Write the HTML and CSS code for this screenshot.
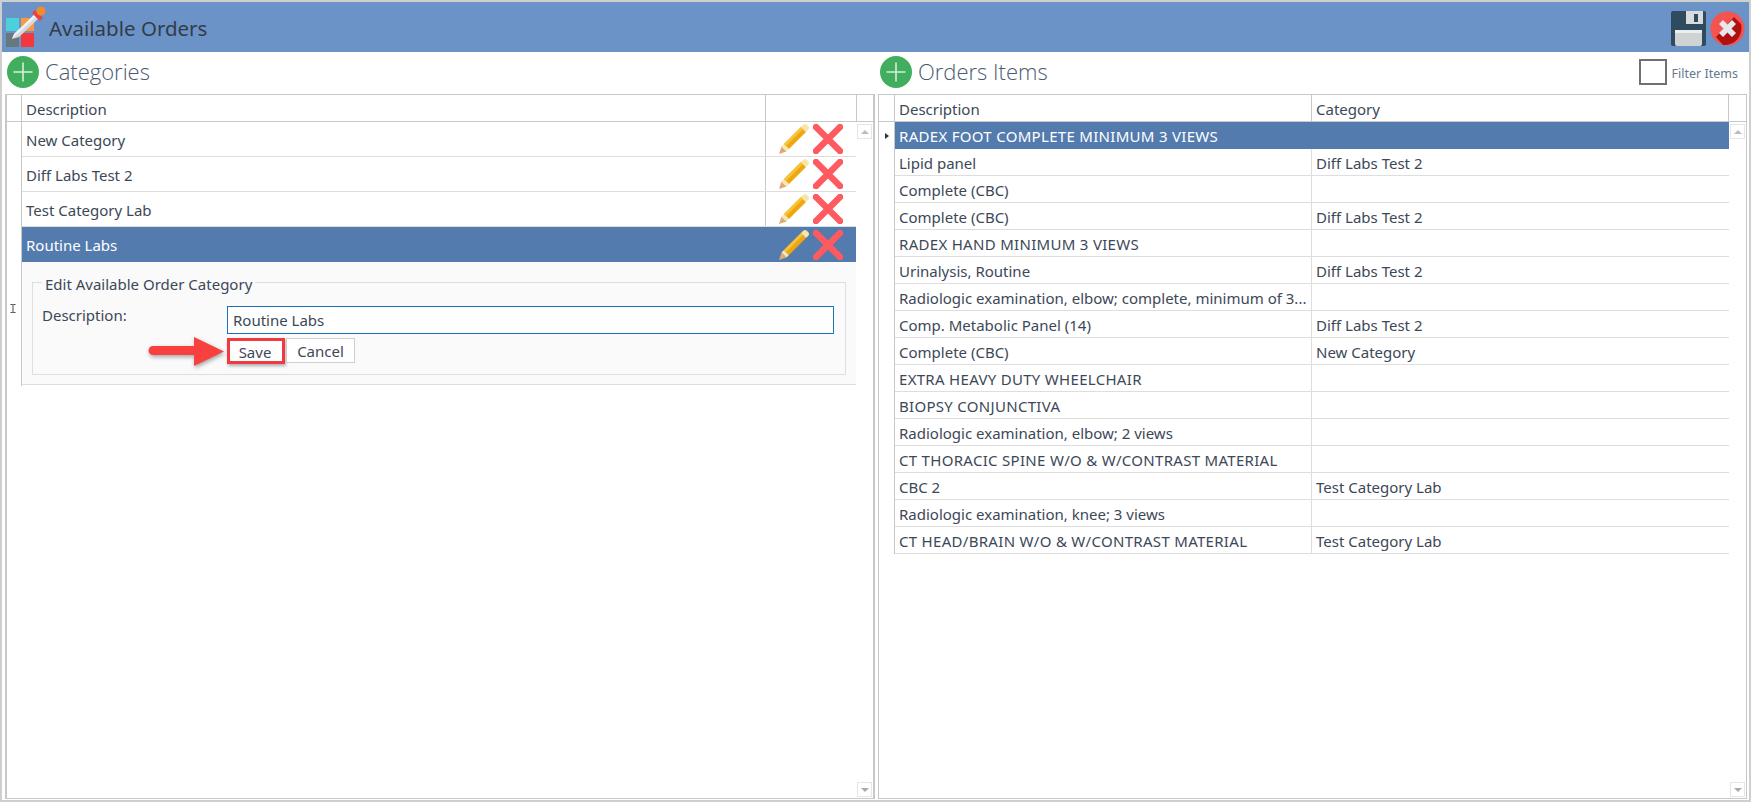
FILE: index.html
```html
<!DOCTYPE html>
<html lang="en">
<head>
<meta charset="utf-8">
<title>Available Orders</title>
<link rel="stylesheet" href="styles.css">
</head>
<body>
<div class="window">
  <header class="titlebar">
    <svg class="logo" viewBox="0 0 40 44" aria-hidden="true">
      <rect x="0" y="12" width="13" height="13" fill="#4cd0dc"/>
      <rect x="15" y="12" width="13" height="13" fill="#fb9a3c"/>
      <rect x="0" y="27" width="13" height="14" fill="#66797f"/>
      <rect x="15" y="27" width="13" height="14" fill="#f4363f"/>
      <path d="M6 33 L8 28 L28 9 L32 13 L13 31 Z" fill="#d5d9dc"/>
      <path d="M6 33 L8 28 L28 9 L30 11 Z" fill="#eef0f1"/>
      <path d="M26 7 L29 4 L37 12 L34 15 Z" fill="#ee4040"/>
      <circle cx="35" cy="5" r="4.5" fill="#f58a2c"/>
    </svg>
    <h1 class="app-title">Available Orders</h1>
    <svg class="save-icon" viewBox="0 0 35 35" aria-hidden="true">
      <path d="M2 0 H33 a2 2 0 0 1 2 2 V33 a2 2 0 0 1 -2 2 H2 a2 2 0 0 1 -2 -2 V2 a2 2 0 0 1 2 -2 Z" fill="#2f4b5f"/>
      <rect x="15" y="0" width="17" height="13" fill="#d9dcdd"/>
      <rect x="23" y="3" width="4" height="8" fill="#2f4b5f"/>
      <rect x="4" y="19" width="27" height="16" rx="2" fill="#cfd3d4"/>
      <rect x="4" y="19" width="27" height="3" fill="#eceeee"/>
    </svg>
    <svg class="close-icon" viewBox="0 0 35 35" aria-hidden="true">
      <circle cx="17.5" cy="17.5" r="17" fill="#f4544f"/>
      <path d="M24 6 L31 13 A17 17 0 0 1 13 34 L6 26 Z" fill="#b21010"/>
      <path d="M9 13 L13 9 L17.5 13.5 L22 9 L26 13 L21.5 17.5 L26 22 L22 26 L17.5 21.5 L13 26 L9 22 L13.5 17.5 Z" fill="#e6e8ec"/>
    </svg>
  </header>

  <main class="panes">
    <section class="pane">
      <div class="pane-head">
        <svg class="add-icon" viewBox="0 0 32 32" aria-hidden="true">
          <circle cx="16" cy="16" r="16" fill="#40ae5c"/>
          <path d="M16 6.5 V25.5 M6.5 16 H25.5" stroke="#d5efdc" stroke-width="1.6"/>
        </svg>
        <h2 class="pane-title">Categories</h2>
      </div>
      <div class="grid grid-left">
        <div class="grid-header">
          <div class="cell-ind"></div>
          <div class="hcell cat-desc">Description</div>
          <div class="hcell cat-act"></div>
          <div class="hcell-end"></div>
        </div>
        <div class="grid-body">
          <div class="indicator-col indicator-left">
            <svg class="ibeam" viewBox="0 0 6 9" aria-hidden="true"><path d="M.5 .5 H2.5 L3 1 L3.5 .5 H5.5 M3 1 V8 M.5 8.5 H2.5 L3 8 L3.5 8.5 H5.5" fill="none" stroke="#333" stroke-width=".9"/></svg>
          </div>
          <div class="rows">
            <div class="cat-row"><div class="cat-text">New Category</div><div class="cat-actions">
              <svg class="pencil" viewBox="0 0 30 30"><use href="#pencil"/></svg><svg class="cross" viewBox="0 0 30 30"><use href="#cross"/></svg></div></div>
            <div class="cat-row"><div class="cat-text">Diff Labs Test 2</div><div class="cat-actions">
              <svg class="pencil" viewBox="0 0 30 30"><use href="#pencil"/></svg><svg class="cross" viewBox="0 0 30 30"><use href="#cross"/></svg></div></div>
            <div class="cat-row"><div class="cat-text">Test Category Lab</div><div class="cat-actions">
              <svg class="pencil" viewBox="0 0 30 30"><use href="#pencil"/></svg><svg class="cross" viewBox="0 0 30 30"><use href="#cross"/></svg></div></div>
            <div class="cat-row selected"><div class="cat-text">Routine Labs</div><div class="cat-actions">
              <svg class="pencil" viewBox="0 0 30 30"><use href="#pencil"/></svg><svg class="cross" viewBox="0 0 30 30"><use href="#cross"/></svg></div></div>
            <div class="detail">
              <fieldset class="edit-box">
                <legend>Edit Available Order Category</legend>
                <div class="form-grid">
                  <label class="form-label" for="desc">Description:</label>
                  <input class="form-input" id="desc" type="text" value="Routine Labs">
                  <div class="form-buttons">
                    <button class="btn btn-save" type="button">Save</button>
                    <button class="btn" type="button">Cancel</button>
                    <svg class="arrow" viewBox="0 0 84 38" aria-hidden="true">
                      <path d="M4 10 H45 V1 L75 15.5 L45 30 V19 H4 a4.5 4.5 0 0 1 0 -9 Z" fill="#f8403f"/>
                    </svg>
                  </div>
                </div>
              </fieldset>
            </div>
          </div>
          <div class="scroll"><span class="sbtn"><i class="tri-up"></i></span><span class="sbtn"><i class="tri-down"></i></span></div>
        </div>
      </div>
    </section>

    <section class="pane">
      <div class="pane-head">
        <svg class="add-icon" viewBox="0 0 32 32" aria-hidden="true">
          <circle cx="16" cy="16" r="16" fill="#40ae5c"/>
          <path d="M16 6.5 V25.5 M6.5 16 H25.5" stroke="#d5efdc" stroke-width="1.6"/>
        </svg>
        <h2 class="pane-title">Orders Items</h2>
        <label class="filter"><span class="checkbox"></span><span class="filter-text">Filter Items</span></label>
      </div>
      <div class="grid grid-right">
        <div class="grid-header">
          <div class="cell-ind cell-ind-right"></div>
          <div class="hcell ord-desc">Description</div>
          <div class="hcell ord-cat">Category</div>
          <div class="hcell-end"></div>
        </div>
        <div class="grid-body">
          <div class="indicator-col indicator-right"><i class="tri-right"></i></div>
          <div class="rows">
            <div class="ord-row selected"><div class="ord-desc-c wide caps">RADEX FOOT COMPLETE MINIMUM 3 VIEWS</div></div>
            <div class="ord-row"><div class="ord-desc-c">Lipid panel</div><div class="ord-cat-c">Diff Labs Test 2</div></div>
            <div class="ord-row"><div class="ord-desc-c">Complete (CBC)</div><div class="ord-cat-c"></div></div>
            <div class="ord-row"><div class="ord-desc-c">Complete (CBC)</div><div class="ord-cat-c">Diff Labs Test 2</div></div>
            <div class="ord-row"><div class="ord-desc-c caps">RADEX HAND MINIMUM 3 VIEWS</div><div class="ord-cat-c"></div></div>
            <div class="ord-row"><div class="ord-desc-c">Urinalysis, Routine</div><div class="ord-cat-c">Diff Labs Test 2</div></div>
            <div class="ord-row"><div class="ord-desc-c">Radiologic examination, elbow; complete, minimum of 3...</div><div class="ord-cat-c"></div></div>
            <div class="ord-row"><div class="ord-desc-c">Comp. Metabolic Panel (14)</div><div class="ord-cat-c">Diff Labs Test 2</div></div>
            <div class="ord-row"><div class="ord-desc-c">Complete (CBC)</div><div class="ord-cat-c">New Category</div></div>
            <div class="ord-row"><div class="ord-desc-c caps">EXTRA HEAVY DUTY WHEELCHAIR</div><div class="ord-cat-c"></div></div>
            <div class="ord-row"><div class="ord-desc-c caps">BIOPSY CONJUNCTIVA</div><div class="ord-cat-c"></div></div>
            <div class="ord-row"><div class="ord-desc-c">Radiologic examination, elbow; 2 views</div><div class="ord-cat-c"></div></div>
            <div class="ord-row"><div class="ord-desc-c caps">CT THORACIC SPINE W/O &amp; W/CONTRAST MATERIAL</div><div class="ord-cat-c"></div></div>
            <div class="ord-row"><div class="ord-desc-c">CBC 2</div><div class="ord-cat-c">Test Category Lab</div></div>
            <div class="ord-row"><div class="ord-desc-c">Radiologic examination, knee; 3 views</div><div class="ord-cat-c"></div></div>
            <div class="ord-row"><div class="ord-desc-c caps">CT HEAD/BRAIN W/O &amp; W/CONTRAST MATERIAL</div><div class="ord-cat-c">Test Category Lab</div></div>
          </div>
          <div class="scroll"><span class="sbtn"><i class="tri-up"></i></span><span class="sbtn"><i class="tri-down"></i></span></div>
        </div>
      </div>
    </section>
  </main>
</div>

<svg class="defs" aria-hidden="true">
  <symbol id="pencil" viewBox="0 0 30 30">
    <path d="M0 30 L2.5 22.5 L7.5 27.5 Z" fill="#dfa878"/>
    <path d="M2.5 22.5 L5 20 L10 25 L7.5 27.5 Z" fill="#f6e7b0"/>
    <path d="M5 20 L22 3 L27 8 L10 25 Z" fill="#eda711"/>
    <path d="M5 20 L22 3 L24 5 L7 22 Z" fill="#f8c33a"/>
    <path d="M22 3 L24.5 0.5 Q26 -0.5 27.5 .5 L29.5 2.5 Q30.5 4 29.5 5.5 L27 8 Z" fill="#f7e6a8"/>
  </symbol>
  <symbol id="cross" viewBox="0 0 30 30">
    <path d="M3 3 L27 27 M27 3 L3 27" stroke="#ff5a60" stroke-width="6.5" stroke-linecap="round"/>
  </symbol>
</svg>
</body>
</html>
```

FILE: styles.css
```css
* { box-sizing: border-box; }
html, body { margin: 0; padding: 0; background: #fff; }
body {
  width: 1751px;
  height: 802px;
  overflow: hidden;
  font-family: "Noto Sans", "Open Sans", sans-serif;
  font-size: 15px;
  color: #3c4858;
}
.defs { width: 0; height: 0; position: absolute; }

.window {
  width: 1751px;
  height: 802px;
  border: 2px solid #cfcfcf;
  display: flex;
  flex-direction: column;
}

.titlebar {
  height: 50px;
  flex: none;
  background: #6b93c7;
  display: flex;
  align-items: center;
  padding-left: 4px;
  padding-right: 4px;
}
.logo { width: 40px; height: 44px; margin-top: 2px; flex: none; }
.app-title {
  margin: 2px 0 0 3px;
  font-size: 20.5px;
  font-weight: 400;
  color: #333c48;
}
.save-icon { width: 35px; height: 35px; margin-left: auto; margin-top: 2px; }
.close-icon { width: 35px; height: 35px; margin-left: 4px; margin-top: 2px; }

.panes {
  flex: 1;
  min-height: 0;
  display: grid;
  grid-template-columns: 870px 869px;
  column-gap: 3px;
  padding: 0 0 1px 3px;
}
.pane { display: flex; flex-direction: column; min-height: 0; }
.pane-head {
  height: 42px;
  flex: none;
  display: flex;
  align-items: center;
  padding: 0 0 2px 2px;
}
.add-icon { width: 32px; height: 32px; flex: none; }
.pane-title {
  margin: -2px 0 0 6px;
  font-family: "Open Sans", "Noto Sans", sans-serif;
  font-size: 22px;
  font-weight: 300;
  color: #4a5a70;
}
.filter {
  margin-left: auto;
  margin-right: 9px;
  display: flex;
  align-items: center;
  font-size: 12.5px;
  color: #66788e;
}
.filter-text { margin-top: 3px; }
.checkbox {
  width: 28px;
  height: 26px;
  border: 2px solid #707070;
  margin-right: 5px;
}

.grid {
  flex: 1;
  min-height: 0;
  display: flex;
  flex-direction: column;
  border: 1px solid #c8c8c8;
}
.grid-left { border-left-width: 2px; border-right-width: 2px; }

.grid-header {
  height: 27px;
  flex: none;
  display: flex;
  border-bottom: 1px solid #c8c8c8;
}
.cell-ind { width: 15px; flex: none; border-right: 1px solid #c8c8c8; }
.cell-ind-right { width: 16px; }
.hcell {
  flex: none;
  border-right: 1px solid #c8c8c8;
  padding-left: 4px;
  line-height: 28px;
}
.hcell-end { flex: 1; }
.cat-desc { width: 744px; }
.cat-act { width: 91px; }
.ord-desc { width: 417px; }
.ord-cat { width: 417px; }

.grid-body { flex: 1; min-height: 0; display: flex; }
.indicator-col { flex: none; position: relative; }
.indicator-left { width: 15px; height: 264px; border-right: 1px solid #c8c8c8; }
.indicator-right { width: 16px; height: 432px; border-right: 1px solid #c8c8c8; }
.ibeam {
  position: absolute;
  left: 3px;
  top: 182px;
  width: 6px;
  height: 9px;
}
.tri-right {
  position: absolute;
  left: 6px;
  top: 11px;
  border-left: 4px solid #333;
  border-top: 3.5px solid transparent;
  border-bottom: 3.5px solid transparent;
}

.rows { width: 834px; flex: none; }

.cat-row {
  height: 35px;
  display: flex;
  border-bottom: 1px solid #dedede;
}
.cat-text {
  width: 744px;
  flex: none;
  border-right: 1px solid #c8c8c8;
  padding-left: 4px;
  line-height: 36px;
}
.cat-actions {
  flex: 1;
  display: flex;
  align-items: center;
  padding-left: 13px;
  gap: 4px;
}
.pencil, .cross { width: 30px; height: 30px; flex: none; }
.cat-row.selected { background: #537bae; color: #fff; border-bottom: 0; }
.cat-row.selected .cat-text { border-right: 0; }

.detail {
  height: 123px;
  background: #fafafa;
  border-bottom: 1px solid #dedede;
  padding: 10px 10px 0 10px;
}
.edit-box {
  margin: 0;
  height: 103px;
  padding: 14px 11px 0 9px;
  border: 1px solid #dedede;
  min-width: 0;
}
.edit-box legend {
  padding: 0 3px;
  margin: 0;
  line-height: 20px;
  position: relative;
  top: 2px;
}
.form-grid {
  display: grid;
  grid-template-columns: 185px 607px;
  row-gap: 4px;
}
.form-label { line-height: 18px; }
.form-input {
  height: 28px;
  width: 607px;
  border: 1px solid #1c74b8;
  background: #fff;
  font: inherit;
  color: inherit;
  padding: 0 5px;
  outline: 0;
}
.form-buttons {
  grid-column: 2;
  display: flex;
  gap: 1px;
  position: relative;
}
.btn {
  height: 25px;
  width: 69px;
  padding: 0;
  border: 1px solid #cfcfcf;
  background: #fff;
  font: inherit;
  color: inherit;
  line-height: 22px;
}
.btn-save {
  width: 58px;
  height: 26px;
  border: 3px solid #ef3a3f;
  padding-right: 2px;
  box-shadow: 1px 2px 3px rgba(0,0,0,.3);
}
.arrow {
  position: absolute;
  left: -78px;
  top: -2px;
  width: 84px;
  height: 38px;
  overflow: visible;
  filter: drop-shadow(1px 2px 2px rgba(0,0,0,.35));
}

.ord-row {
  height: 27px;
  display: flex;
  border-bottom: 1px solid #dedede;
}
.ord-desc-c {
  width: 417px;
  flex: none;
  border-right: 1px solid #dedede;
  padding-left: 4px;
  line-height: 28px;
  white-space: nowrap;
  overflow: hidden;
}
.caps { letter-spacing: .3px; }
.ord-cat-c { flex: 1; padding-left: 4px; line-height: 28px; }
.ord-row.selected { background: #537bae; color: #fff; border-bottom: 0; }
.ord-desc-c.wide { width: 100%; border-right: 0; }

.scroll {
  flex: 1;
  display: flex;
  flex-direction: column;
  justify-content: space-between;
  align-items: center;
  padding: 2px 0 1px;
}
.sbtn {
  width: 15px;
  height: 15px;
  border: 1px solid #e6e6e6;
  display: flex;
  align-items: center;
  justify-content: center;
}
.tri-up {
  border-bottom: 4px solid #bbb;
  border-left: 4px solid transparent;
  border-right: 4px solid transparent;
}
.tri-down {
  border-top: 4px solid #aaa;
  border-left: 4px solid transparent;
  border-right: 4px solid transparent;
}
```
